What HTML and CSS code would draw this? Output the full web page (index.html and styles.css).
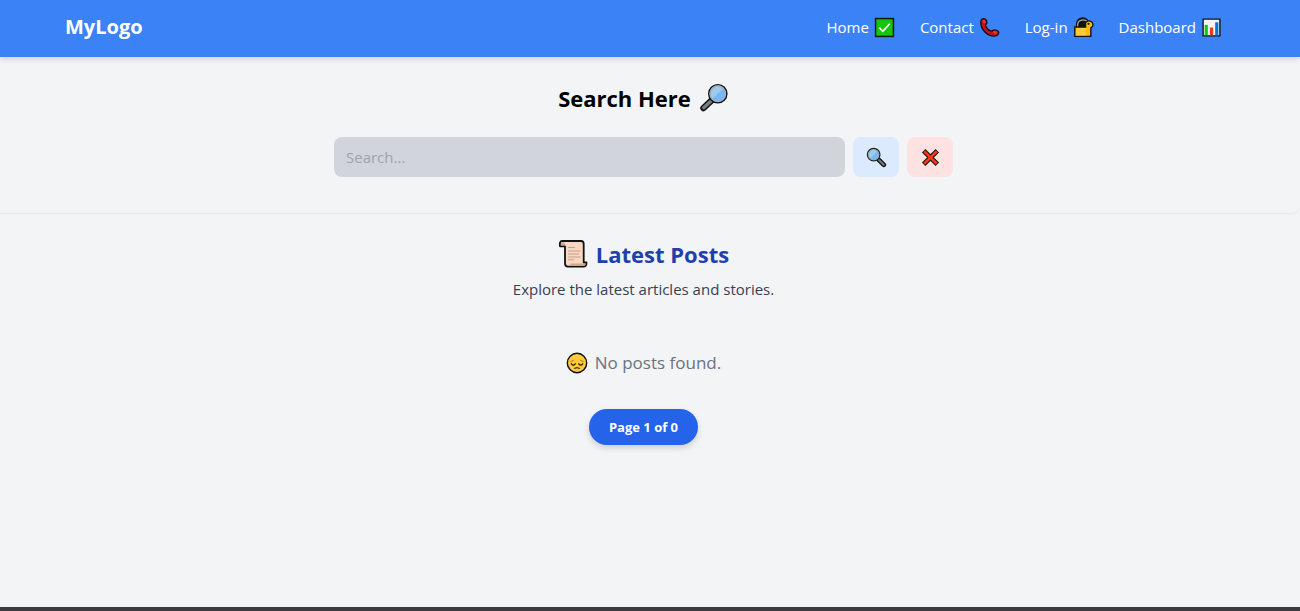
FILE: index.html
```
<!DOCTYPE html>
<html lang="en">
<head>
<meta charset="utf-8">
<title>MyLogo</title>
<meta name="viewport" content="width=device-width, initial-scale=1">
<link rel="stylesheet" href="styles.css">
</head>
<body>
<header class="header">
  <div class="header-inner">
    <a class="logo" href="#">MyLogo</a>
    <nav class="nav">
      <a class="nav-link" href="#">Home
        <svg class="icon" viewBox="0 0 20 20" aria-hidden="true"><rect x="1.5" y="1.5" width="17" height="17" fill="#16c60c" stroke="#0b1a0b" stroke-width="1.4"/><path d="M5 10.2l3.4 3.4L15 6.4" fill="none" stroke="#fff" stroke-width="1.6"/></svg>
      </a>
      <a class="nav-link" href="#">Contact
        <svg class="icon" viewBox="0 0 20 20" aria-hidden="true"><path d="M1.700 5.200C1.700 3 3 1.600 4.600 1.600c1.700 0 2.900 2 2.900 3.700 0 1.300-1.300 1.700-1.200 2.700.3 2.200 3.100 4.900 5.500 5.500 1 .2 1.400-1.400 2.900-1.200 1.900.2 4 1.300 4 2.700 0 1.800-2 3.200-4.500 3.200C8.200 18.200 1.700 12 1.700 5.200z" fill="#c50f1f" stroke="#111" stroke-width="1.300"/><path d="M4.200 3.200l1.600 2.400M13.600 14.200l3.400.8" stroke="#f03a17" stroke-width="2.200"/></svg>
      </a>
      <a class="nav-link" href="#">Log-in
        <svg class="icon" viewBox="0 0 20 20" aria-hidden="true"><path d="M4.200 10V7c0-7 10-7 10 0v3" fill="#111" stroke="#111" stroke-width="3"/><path d="M4.400 10V7.500c0-5.500 8-6 9.400-2" fill="none" stroke="#a5a5ab" stroke-width="1.200"/><path d="M1.700 9.500h10.300V7.200c-.6-2.600 2.400-4 4.400-3.200 2.900.9 3.300 4.200 1.500 5.700l-.9.6v8.200H1.700z" fill="#ffb900" stroke="#111" stroke-width="1.300"/><path d="M3 10.500h9.500v7H3z" fill="#ffc83d"/><circle cx="14.800" cy="6.500" r="1.100" fill="#111"/></svg>
      </a>
      <a class="nav-link" href="#">Dashboard
        <svg class="icon" viewBox="0 0 20 20" aria-hidden="true"><path d="M2 2h16v16H2z" fill="#f4f4f4" stroke="#111" stroke-width="1.300"/><path d="M3.500 7.500h3v9.800h-3z" fill="#16c60c"/><path d="M8.500 10h3v7.300h-3z" fill="#f03a17"/><path d="M13.500 5h3v12.300h-3z" fill="#0078d7"/></svg>
      </a>
    </nav>
  </div>
</header>
<main class="main">
  <section class="search">
    <h2 class="title">Search Here
      <svg class="icon-large" viewBox="0 0 30 30" aria-hidden="true"><path d="M13 17L4.500 25" stroke="#111" stroke-width="6.500" stroke-linecap="round"/><path d="M12 18L4.700 24.700" stroke="#7a7f82" stroke-width="3.400" stroke-linecap="round"/><circle cx="18.800" cy="10.800" r="9" fill="#9ccbf2" stroke="#111" stroke-width="1.600"/><circle cx="18.800" cy="10.800" r="7.700" fill="none" stroke="#a8afb5" stroke-width="1.500"/><path d="M13.300 15.800L24.300 5.500a7 7 0 0 1-11 10.300z" fill="#78b8ee"/></svg>
    </h2>
    <form class="search-form">
      <input class="search-input" type="text" placeholder="Search..." aria-label="Search">
      <button class="button button-find" type="button" aria-label="Search">
        <svg class="icon" viewBox="0 0 20 20" aria-hidden="true"><path d="M12 12l5 5" stroke="#111" stroke-width="4.400" stroke-linecap="round"/><path d="M12.500 12.500l4.400 4.400" stroke="#777c80" stroke-width="2" stroke-linecap="round"/><circle cx="7.300" cy="7.300" r="5.900" fill="#9ccbf2" stroke="#222" stroke-width="1.300"/><circle cx="7.300" cy="7.300" r="4.900" fill="none" stroke="#a0a8ae"/><path d="M4.200 10.600l6.500-6.500a4.500 4.500 0 0 1-6.500 6.500z" fill="#78b8ee"/></svg>
      </button>
      <button class="button button-clear" type="button" aria-label="Clear">
        <svg class="icon" viewBox="0 0 20 20" aria-hidden="true"><path d="M3.500 3.500l13 13M16.500 3.500l-13 13" stroke="#111" stroke-width="4.600"/><path d="M4 4l12 12M16 4L4 16" stroke="#f03a17" stroke-width="2.600"/></svg>
      </button>
    </form>
  </section>
  <section class="posts">
    <h2 class="title title-posts">
      <svg class="icon-large" viewBox="0 0 30 30" aria-hidden="true"><path d="M4 2h19c1.800 0 2.700 1.500 2.700 3v18.500H28.500c0 2.800-1 4.200-3 4.200H10c-2 0-3-1.300-3-3.500V7.300H2C1.500 4 2.200 2 4 2z" fill="#f7d7c4" stroke="#111" stroke-width="1.800" stroke-linejoin="round"/><path d="M3 3.500h3c1 .6 1 1.500 1 2.700H3zM12.500 24.400h15.200c0 1.600-.9 2.400-2 2.400H10.500c1.500 0 2-1.200 2-2.400z" fill="#d3a78e"/><path d="M10 8.500h7M10 12h12.500M10 15h11M10 18h12.500M10 20.800h6" stroke="#c9a07f" stroke-width="1.100"/></svg>
      Latest Posts
    </h2>
    <p class="subtitle">Explore the latest articles and stories.</p>
    <p class="empty">
      <svg class="icon-face" viewBox="0 0 22 22" aria-hidden="true"><circle cx="11" cy="11" r="9.700" fill="#ffc83d" stroke="#111" stroke-width="1.400"/><path d="M4.300 9.600c1.700-.1 2.800-.7 3.400-1.800M17.700 9.600c-1.700-.1-2.800-.7-3.400-1.800" fill="none" stroke="#c88a16" stroke-width="1.100"/><path d="M5.300 11.700c.8 1.900 3.200 1.900 4 0M12.700 11.700c.8 1.900 3.200 1.900 4 0M8.800 16.300c1.400-.7 3-.7 4.400 0" fill="none" stroke="#111" stroke-width="1.200" stroke-linecap="round"/></svg>
      No posts found.
    </p>
    <span class="page-pill">Page 1 of 0</span>
  </section>
</main>
<footer class="footer"></footer>
</body>
</html>
```
FILE: styles.css
```
* { box-sizing: border-box; }

body {
  margin: 0;
  min-height: 100vh;
  display: flex;
  flex-direction: column;
  background: #f3f4f6;
  color: #000;
  font: 15px/24px "Segoe UI", "Open Sans", sans-serif;
}

h2, p { margin: 0; }

.header {
  padding: 14px 6% 17px 5%;
  background: #3b82f6;
  box-shadow: 0 2px 6px rgba(0, 0, 0, 0.15);
}

.header-inner {
  display: flex;
  align-items: center;
  justify-content: space-between;
  min-height: 26px;
}

.logo {
  color: #fff;
  font-size: 20px;
  line-height: 26px;
  font-weight: 700;
  text-decoration: none;
}

.nav { display: flex; gap: 25px; }

.nav-link {
  display: flex;
  align-items: center;
  gap: 5px;
  color: #fff;
  text-decoration: none;
}

.icon { width: 21px; height: 21px; flex: none; }
.icon-large { width: 30px; height: 30px; flex: none; }
.icon-face { width: 22px; height: 22px; flex: none; }

.main { flex: 1; }

.search {
  padding: 24px 13px 36px 0;
  border-radius: 0 0 8px 0;
  box-shadow: 0 1px 2px rgba(0, 0, 0, 0.06);
}

.title {
  display: flex;
  align-items: center;
  justify-content: center;
  gap: 8px;
  font-size: 22px;
  line-height: 34px;
  font-weight: 700;
}

.title-posts { color: #1e40af; }

.search-form {
  display: flex;
  gap: 8px;
  width: 90%;
  max-width: 619px;
  margin: 22px auto 0;
}

.search-input {
  flex: 1;
  min-width: 0;
  height: 40px;
  padding: 0 12px;
  border: 0;
  border-radius: 8px;
  background: #d1d5db;
  color: #1f2937;
  font: inherit;
}

.search-input::placeholder { color: #9ca3af; }

.button {
  display: flex;
  align-items: center;
  justify-content: center;
  width: 46px;
  height: 40px;
  padding: 0;
  border: 0;
  border-radius: 8px;
}

.button-find { background: #dbeafe; }
.button-clear { background: #fee2e2; }

.posts {
  display: flex;
  flex-direction: column;
  align-items: center;
  padding: 24px 13px 24px 0;
}

.subtitle { margin-top: 6px; color: #374151; }

.empty {
  display: flex;
  align-items: center;
  gap: 7px;
  margin-top: 48px;
  color: #6b7280;
  font-size: 17px;
  line-height: 28px;
}

.page-pill {
  margin-top: 32px;
  padding: 8px 20px;
  border-radius: 18px;
  background: #2563eb;
  box-shadow: 0 3px 6px rgba(0, 0, 0, 0.15);
  color: #fff;
  font-size: 13px;
  line-height: 20px;
  font-weight: 700;
}

.footer { height: 4px; background: #3b3b41; }
```
